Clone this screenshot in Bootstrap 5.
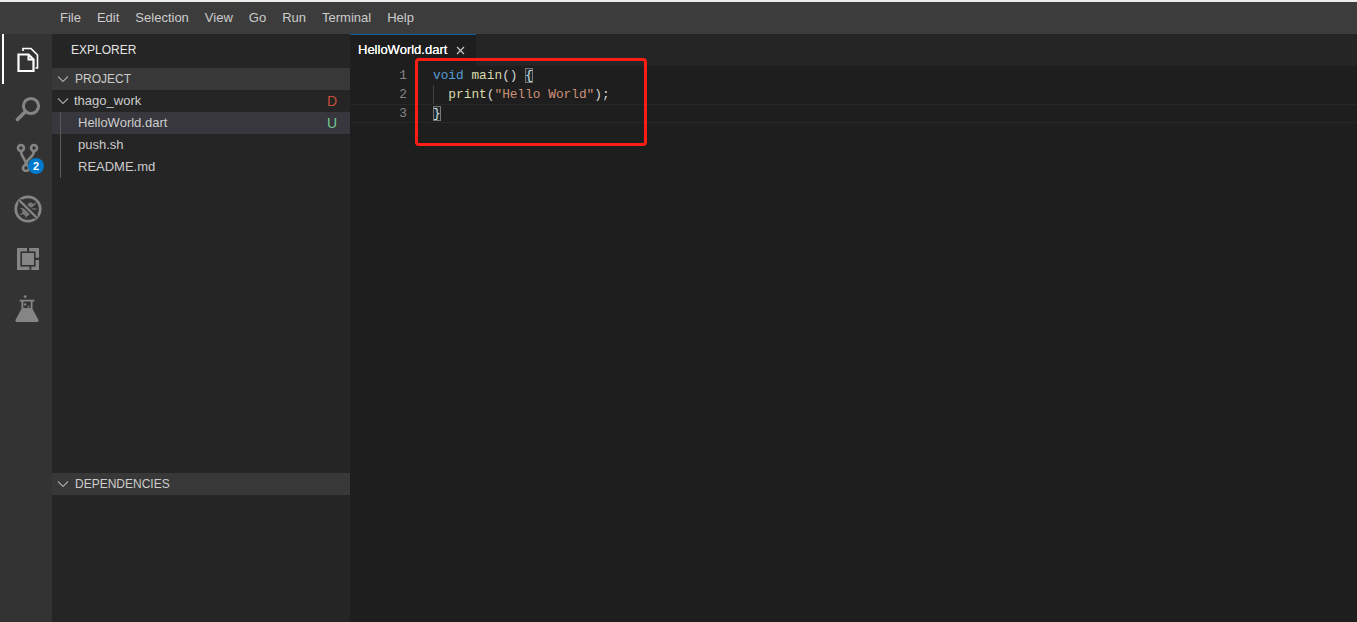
<!DOCTYPE html>
<html lang="en">
<head>
<meta charset="utf-8">
<title>HelloWorld.dart</title>
<link href="https://cdn.jsdelivr.net/npm/bootstrap@5.3.0/dist/css/bootstrap.min.css" rel="stylesheet">
<style>
html,body{height:622px;overflow:hidden;background:#1e1e1e}
body{font-family:"Liberation Sans",Arial,sans-serif;font-size:13px;color:#ccc;border-top:2px solid #ececec}
.vs-shell{height:620px;position:relative}
.vs-title{height:32px;background:#3c3c3c;padding-left:60px;gap:16px;line-height:31px;color:#ccc;flex:none}
.vs-main{flex:1;min-height:0}
.vs-activity{width:52px;background:#333;flex:none}
.vs-act{height:50px;position:relative;color:#858585;padding-left:4px}
.vs-act.on{color:#fff}
.vs-act.flask{padding-left:2px}
.vs-act.on::before{content:"";position:absolute;left:2px;top:0;bottom:0;width:2px;background:#fff}
.vs-badge{position:absolute;left:28px;top:24px;width:16px;height:16px;border-radius:50%;background:#007acc;color:#fff;font-size:11px;font-weight:700;line-height:16px;text-align:center}
.vs-side{width:298px;background:#252526;flex:none}
.vs-side-title{height:34px;padding-left:19px;line-height:33px;color:#e4e4e4;font-size:12px}
.vs-head{height:22px;background:#383838;line-height:22px;color:#ccc;font-size:12px;flex:none}
.vs-chev{width:23px;flex:none;padding-left:5px}
.vs-chev.tree{width:22px}
.vs-row{height:22px;line-height:22px;padding-right:13px;flex:none}
.vs-row.sel{background:#37373d}
.vs-files{position:relative}
.vs-files::before{content:"";position:absolute;left:8px;top:0;bottom:0;width:1px;background:#585858}
.vs-files .vs-row{padding-left:26px}
.vs-d{color:#c74e39;font-size:14px}
.vs-u{color:#73c991;font-size:14px}
.vs-fill{flex:1}
.vs-depbody{height:127px;flex:none}
.vs-editor{flex:1;min-width:0;background:#1e1e1e}
.vs-tabs{height:32px;background:#252526;flex:none}
.vs-tab{width:126px;background:#1e1e1e;border-top:1px solid #0e639c;padding-left:8px;line-height:30px;color:#fff;font-size:13px;text-shadow:0 0 .4px #fff}
.vs-tab svg{margin-left:9px}
.vs-code{font-family:"Liberation Mono","DejaVu Sans Mono",monospace;font-size:12.8px;line-height:19px;color:#d4d4d4}
.vs-line{height:19px;position:relative;white-space:pre}
.vs-low{line-height:20px}
.vs-cur{height:19px;border-top:1px solid #282828;border-bottom:1px solid #282828;line-height:17px}
.vs-num{display:inline-block;width:57px;text-align:right;color:#858585}
.vs-txt{display:inline-block;margin-left:26px;position:relative}
.vs-k{color:#569cd6}.vs-f{color:#dcdcaa}.vs-s{color:#ce9178}
.vs-match{outline:1px solid #777;outline-offset:-1px;background:#1e2a30;color:#d4e4e4}
.vs-guide{position:absolute;left:0;top:0;bottom:0;width:1px;background:#404040}
.vs-note{position:absolute;left:415px;top:56px;width:232px;height:88px;border:3px solid #fb1e14;border-radius:4px}
</style>
</head>
<body>
<div class="vs-shell d-flex flex-column">
  <div class="vs-title d-flex"><span>File</span><span>Edit</span><span>Selection</span><span>View</span><span>Go</span><span>Run</span><span>Terminal</span><span>Help</span></div>
  <div class="vs-main d-flex">
    <div class="vs-activity d-flex flex-column">
      <div class="vs-act on d-flex align-items-center justify-content-center">
        <svg width="22" height="26" viewBox="0 0 22 26" fill="none" stroke="currentColor" stroke-width="2"><path d="M1.500 8.500h10l5 5V25h-15z" stroke-width="2.200"/><path d="M11.500 8.500v5h5"/><path d="M6 5V2.500h8l6.500 6.500v13h-2" stroke-width="1.600"/></svg>
      </div>
      <div class="vs-act d-flex align-items-center justify-content-center">
        <svg width="26" height="26" viewBox="0 0 26 26" fill="none" stroke="currentColor"><circle cx="16" cy="10" r="7.600" stroke-width="3"/><path d="M10.500 15.500L2.500 23.500" stroke-width="3.600" stroke-linecap="round"/></svg>
      </div>
      <div class="vs-act d-flex align-items-start justify-content-center pt-2">
        <svg width="24" height="30" viewBox="0 0 24 30" fill="none" stroke="currentColor" stroke-width="2.600"><circle cx="5" cy="6" r="3"/><circle cx="18" cy="6" r="3"/><circle cx="10" cy="26" r="3"/><path d="M5 9c0 7 5 7 5 14M18 9c0 7-8 7-8 14"/></svg>
        <span class="vs-badge">2</span>
      </div>
      <div class="vs-act d-flex align-items-center justify-content-center">
        <svg width="28" height="28" viewBox="0 0 28 28"><circle cx="14" cy="14" r="12.200" fill="none" stroke="currentColor" stroke-width="2.800"/><ellipse cx="12.500" cy="16.500" rx="4.200" ry="4.600" fill="currentColor" opacity=".85"/><circle cx="16.500" cy="10" r="2.600" fill="currentColor" opacity=".85"/><path d="M10 7.500l3 3M21.500 8l-3 3M22.500 14h-5M20.500 20l-3.500-2M6.500 13l3 2M6.500 19.500l3-1.500M12 22.500v-2" stroke="currentColor" stroke-width="1.200" fill="none"/><path d="M5.500 5.500L22.500 22.500" stroke="#333" stroke-width="5"/><path d="M5.500 5.500L22.500 22.500" stroke="currentColor" stroke-width="2.400"/></svg>
      </div>
      <div class="vs-act d-flex align-items-center justify-content-center">
        <svg width="22" height="22" viewBox="0 0 22 22"><rect width="22" height="22" fill="currentColor"/><rect x="4.200" y="4.200" width="13.600" height="13.600" fill="none" stroke="#333" stroke-width="1.600"/><path fill="#333" d="M10 0h2.200v4H10zM18 9.800h4V12h-4zM12.500 18h1.800v4h-1.800z"/></svg>
      </div>
      <div class="vs-act flask d-flex align-items-center justify-content-center">
        <svg width="24" height="28" viewBox="0 0 26 30"><circle cx="11" cy="1.500" r="1.500" fill="currentColor"/><path d="M5 6h16M8 6v8.500M18 6v8.500" stroke="currentColor" stroke-width="2" fill="none"/><path fill="currentColor" d="M7.500 14h11L25.500 27c.4 1.200-.3 2-1.500 2H2c-1.200 0-1.900-.8-1.500-2z"/><circle cx="11" cy="10" r="1.300" fill="currentColor"/><circle cx="14.500" cy="12.500" r="1" fill="currentColor"/></svg>
      </div>
    </div>
    <div class="vs-side d-flex flex-column">
      <div class="vs-side-title">EXPLORER</div>
      <div class="vs-head d-flex align-items-center">
        <span class="vs-chev d-flex"><svg width="12" height="8" viewBox="0 0 12 8" fill="none" stroke="#a8a8a8" stroke-width="1.100"><path d="M1 1.500l5 5 5-5"/></svg></span>PROJECT
      </div>
      <div class="vs-row d-flex align-items-center">
        <span class="vs-chev tree d-flex"><svg width="12" height="8" viewBox="0 0 12 8" fill="none" stroke="#a8a8a8" stroke-width="1.100"><path d="M1 1.500l5 5 5-5"/></svg></span>thago_work<span class="vs-d ms-auto">D</span>
      </div>
      <div class="vs-files">
        <div class="vs-row sel d-flex">HelloWorld.dart<span class="vs-u ms-auto">U</span></div>
        <div class="vs-row">push.sh</div>
        <div class="vs-row">README.md</div>
      </div>
      <div class="vs-fill"></div>
      <div class="vs-head d-flex align-items-center">
        <span class="vs-chev d-flex"><svg width="12" height="8" viewBox="0 0 12 8" fill="none" stroke="#a8a8a8" stroke-width="1.100"><path d="M1 1.500l5 5 5-5"/></svg></span>DEPENDENCIES
      </div>
      <div class="vs-depbody"></div>
    </div>
    <div class="vs-editor d-flex flex-column">
      <div class="vs-tabs d-flex"><div class="vs-tab">HelloWorld.dart<svg width="9" height="9" viewBox="0 0 9 9" stroke="#ccc" stroke-width="1.100"><path d="M1 1l7 7M8 1l-7 7"/></svg></div></div>
      <div class="vs-code">
        <div class="vs-line"><span class="vs-num">1</span><span class="vs-txt"><span class="vs-k">void</span> <span class="vs-f">main</span>() <span class="vs-match">{</span></span></div>
        <div class="vs-line vs-low"><span class="vs-num">2</span><span class="vs-txt">  <span class="vs-guide"></span><span class="vs-f">print</span>(<span class="vs-s">"Hello World"</span>);</span></div>
        <div class="vs-line vs-cur"><span class="vs-num">3</span><span class="vs-txt"><span class="vs-match">}</span></span></div>
      </div>
    </div>
  </div>
  <div class="vs-note"></div>
</div>
<script src="https://cdn.jsdelivr.net/npm/bootstrap@5.3.0/dist/js/bootstrap.bundle.min.js"></script>
</body>
</html>
